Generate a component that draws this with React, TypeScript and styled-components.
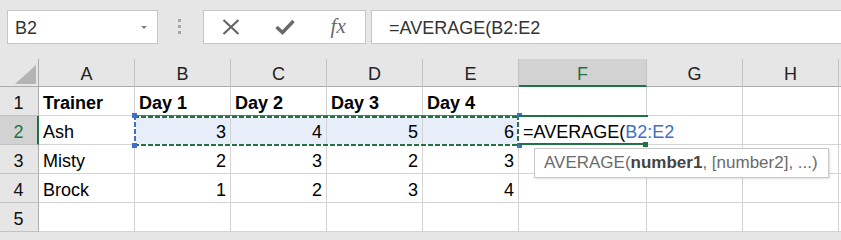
import { Fragment } from 'react'
import styled, { createGlobalStyle } from 'styled-components'

const GlobalStyle = createGlobalStyle`
  html, body {
    margin: 0;
    padding: 0;
    background: #e6e6e6;
  }
  body {
    font-family: 'Liberation Sans', Arial, sans-serif;
    overflow: hidden;
  }
`

const GREEN = '#217346'
const BLUE = '#3f70c7'
const GRID = '#d4d4d4'

const Window = styled.div`
  width: 841px;
  height: 232px;
  overflow: hidden;
  background: #e6e6e6;
  display: flex;
  flex-direction: column;
`

// ---- formula bar ----

const FormulaBar = styled.div`
  height: 60px;
  box-sizing: border-box;
  padding: 10px 0 0 7px;
  display: flex;
  align-items: flex-start;
`

const NameBox = styled.div`
  width: 151px;
  height: 34px;
  box-sizing: border-box;
  border: 1px solid #c6c6c6;
  background: #fff;
  display: flex;
  align-items: center;
  justify-content: space-between;
  padding: 3px 10px 0 7px;
  font-size: 18px;
  color: #333;
`

const Caret = styled.span`
  width: 0;
  height: 0;
  margin-top: -3px;
  border-left: 3px solid transparent;
  border-right: 3px solid transparent;
  border-top: 3px solid #808080;
`

const Grip = styled.div`
  width: 3px;
  margin: 9px 22px 0 20px;
  display: flex;
  flex-direction: column;
  gap: 3px;

  span {
    width: 3px;
    height: 3px;
    background: #a6a6a6;
  }
`

const ButtonGroup = styled.div`
  width: 163px;
  height: 34px;
  box-sizing: border-box;
  border: 1px solid #c6c6c6;
  background: #fff;
  display: flex;
`

const IconSlot = styled.div`
  width: 54px;
  height: 100%;
  display: flex;
  align-items: center;
  justify-content: center;
  color: #666;
`

const Fx = styled.span`
  font-family: 'Liberation Serif', 'Times New Roman', serif;
  font-style: italic;
  font-size: 21px;
  color: #6a6a6a;
  margin-top: -2px;
`

const FormulaInput = styled.div`
  flex: 1;
  height: 34px;
  margin-left: 5px;
  margin-right: -4px;
  box-sizing: border-box;
  border: 1px solid #c6c6c6;
  background: #fff;
  display: flex;
  align-items: center;
  padding: 3px 0 0 17px;
  font-size: 18px;
  color: #333;
`

// ---- sheet ----

const Sheet = styled.div`
  flex: 1;
  display: grid;
  grid-template-columns: 39px repeat(5, 96px) 128px 96px 96px 1fr;
  grid-template-rows: 28px repeat(5, 29px);
  background: #fff;
  font-size: 18px;
`

type Place = { $r: number; $c: number }

const Corner = styled.div`
  grid-row: 1;
  grid-column: 1;
  background: #e6e6e6;
  border-right: 1px solid #ababab;
  border-bottom: 1px solid #ababab;
  display: flex;
  align-items: flex-end;
  justify-content: flex-end;
  padding: 0 2px 2px 0;
`

const ColHead = styled.div<Place & { $active?: boolean }>`
  grid-row: ${({ $r }) => $r};
  grid-column: ${({ $c }) => $c};
  box-sizing: border-box;
  background: ${({ $active }) => ($active ? '#d2d2d2' : '#e6e6e6')};
  color: ${({ $active }) => ($active ? GREEN : '#222')};
  border-right: 1px solid #c3c3c3;
  border-bottom: ${({ $active }) => ($active ? `2px solid ${GREEN}` : '1px solid #ababab')};
  display: flex;
  align-items: flex-end;
  justify-content: center;
  padding-bottom: ${({ $active }) => ($active ? '0' : '1px')};
`

const RowHead = styled.div<Place & { $active?: boolean }>`
  grid-row: ${({ $r }) => $r};
  grid-column: ${({ $c }) => $c};
  box-sizing: border-box;
  background: ${({ $active }) => ($active ? '#d2d2d2' : '#e6e6e6')};
  color: ${({ $active }) => ($active ? GREEN : '#111')};
  border-right: ${({ $active }) => ($active ? `2px solid ${GREEN}` : '1px solid #ababab')};
  border-bottom: 1px solid #c3c3c3;
  display: flex;
  align-items: flex-end;
  justify-content: center;
  padding: 0 ${({ $active }) => ($active ? '0' : '1px')} 1px 0;
`

const Cell = styled.div<Place & { $bold?: boolean; $num?: boolean; $selected?: boolean }>`
  grid-row: ${({ $r }) => $r};
  grid-column: ${({ $c }) => $c};
  box-sizing: border-box;
  background: ${({ $selected }) => ($selected ? '#e8eef9' : '#fff')};
  border-right: 1px solid ${GRID};
  border-bottom: 1px solid ${GRID};
  display: flex;
  align-items: flex-end;
  justify-content: ${({ $num }) => ($num ? 'flex-end' : 'flex-start')};
  padding: 0 4px 1px 4px;
  font-weight: ${({ $bold }) => ($bold ? 700 : 400)};
  color: #000;
  white-space: nowrap;
`

const EditCell = styled.div<Place>`
  grid-row: ${({ $r }) => $r};
  grid-column: ${({ $c }) => $c};
  position: relative;
  z-index: 3;
  box-sizing: border-box;
  background: #fff;
  border-bottom: 1px solid ${GRID};
  display: flex;
  align-items: flex-end;
  padding: 0 0 1px 4px;
  white-space: nowrap;
  color: #000;

  &::before {
    content: '';
    position: absolute;
    left: 0;
    top: -1px;
    width: 129px;
    height: 2px;
    background: ${GREEN};
  }

  &::after {
    content: '';
    position: absolute;
    left: 0;
    bottom: -1px;
    width: 124px;
    height: 2px;
    background: ${GREEN};
  }
`

const FillHandle = styled.span`
  position: absolute;
  right: -1px;
  bottom: -3px;
  width: 5px;
  height: 5px;
  background: ${GREEN};
  border-left: 1px solid #fff;
`

const RangeRef = styled.span`
  color: ${BLUE};
`

const Selection = styled.div`
  grid-column: 3 / 7;
  grid-row: 3;
  margin: -1px 0 -1px -1px;
  position: relative;
  z-index: 2;
  pointer-events: none;
  background:
    linear-gradient(${BLUE}, ${BLUE}) 0 0 / 100% 1px no-repeat,
    repeating-linear-gradient(90deg, ${GREEN} 0 5px, #fff 5px 7px) 0 1px / 100% 2px no-repeat,
    repeating-linear-gradient(90deg, ${GREEN} 0 5px, #fff 5px 7px) 0 100% / 100% 2px no-repeat,
    repeating-linear-gradient(180deg, ${BLUE} 0 5px, #fff 5px 7px) 0 0 / 2px 100% no-repeat,
    repeating-linear-gradient(180deg, ${GREEN} 0 5px, #fff 5px 7px) 100% 0 / 2px 100% no-repeat;

  &::before,
  &::after {
    content: '';
    position: absolute;
    top: -2px;
    width: 5px;
    height: 5px;
    background: ${BLUE};
    box-shadow: 0 30px 0 ${BLUE};
  }
  &::before {
    left: -2px;
  }
  &::after {
    right: -3px;
  }
`

const Tooltip = styled.div`
  position: absolute;
  left: 15px;
  top: 32px;
  width: 295px;
  height: 30px;
  box-sizing: border-box;
  background: #fff;
  border: 1px solid #c8c8c8;
  box-shadow: 1px 1px 2px rgba(0, 0, 0, 0.12);
  padding: 0 0 0 9px;
  font-size: 17px;
  line-height: 28px;
  color: #6b6b6b;

  b {
    color: #444;
  }
`

const CornerIcon = () => (
  <svg width="21" height="19" viewBox="0 0 21 19">
    <polygon points="21,0 21,19 0,19" fill="#b4b4b4" />
  </svg>
)

const CancelIcon = () => (
  <svg width="18" height="16" viewBox="0 0 18 16">
    <path d="M1.5 1 L16.5 15 M16.5 1 L1.5 15" stroke="#666" strokeWidth="2.2" fill="none" />
  </svg>
)

const EnterIcon = () => (
  <svg width="20" height="16" viewBox="0 0 20 16">
    <path d="M1.5 8 L7.5 13.5 L18.5 2" stroke="#6a6a6a" strokeWidth="3.4" fill="none" />
  </svg>
)

const columns = ['A', 'B', 'C', 'D', 'E', 'F', 'G', 'H', '']

type Row = { label: string; cells: (string | number)[] }

const rows: Row[] = [
  { label: '1', cells: ['Trainer', 'Day 1', 'Day 2', 'Day 3', 'Day 4', '', '', '', ''] },
  { label: '2', cells: ['Ash', 3, 4, 5, 6, '', '', '', ''] },
  { label: '3', cells: ['Misty', 2, 3, 2, 3, '', '', '', ''] },
  { label: '4', cells: ['Brock', 1, 2, 3, 4, '', '', '', ''] },
  { label: '5', cells: ['', '', '', '', '', '', '', '', ''] },
]

const App = () => {
  return (
    <Window>
      <GlobalStyle />
      <FormulaBar>
        <NameBox>
          B2
          <Caret />
        </NameBox>
        <Grip>
          <span />
          <span />
          <span />
        </Grip>
        <ButtonGroup>
          <IconSlot>
            <CancelIcon />
          </IconSlot>
          <IconSlot>
            <EnterIcon />
          </IconSlot>
          <IconSlot>
            <Fx>fx</Fx>
          </IconSlot>
        </ButtonGroup>
        <FormulaInput>=AVERAGE(B2:E2</FormulaInput>
      </FormulaBar>

      <Sheet>
        <Corner>
          <CornerIcon />
        </Corner>
        {columns.map((c, i) => (
          <ColHead key={`h${i}`} $r={1} $c={i + 2} $active={c === 'F'}>
            {c}
          </ColHead>
        ))}

        {rows.map((row, r) => (
          <Fragment key={row.label}>
            <RowHead $r={r + 2} $c={1} $active={row.label === '2'}>
              {row.label}
            </RowHead>
            {row.cells.map((v, c) =>
              row.label === '2' && c === 5 ? (
                <EditCell key={c} $r={r + 2} $c={c + 2}>
                  =AVERAGE(<RangeRef>B2:E2</RangeRef>
                  <FillHandle />
                  <Tooltip>
                    AVERAGE(<b>number1</b>, [number2], ...)
                  </Tooltip>
                </EditCell>
              ) : (
                <Cell
                  key={c}
                  $r={r + 2}
                  $c={c + 2}
                  $bold={r === 0}
                  $num={typeof v === 'number'}
                  $selected={row.label === '2' && c >= 1 && c <= 4}
                >
                  {v}
                </Cell>
              )
            )}
          </Fragment>
        ))}

        <Selection />
      </Sheet>
    </Window>
  )
}

export default App
